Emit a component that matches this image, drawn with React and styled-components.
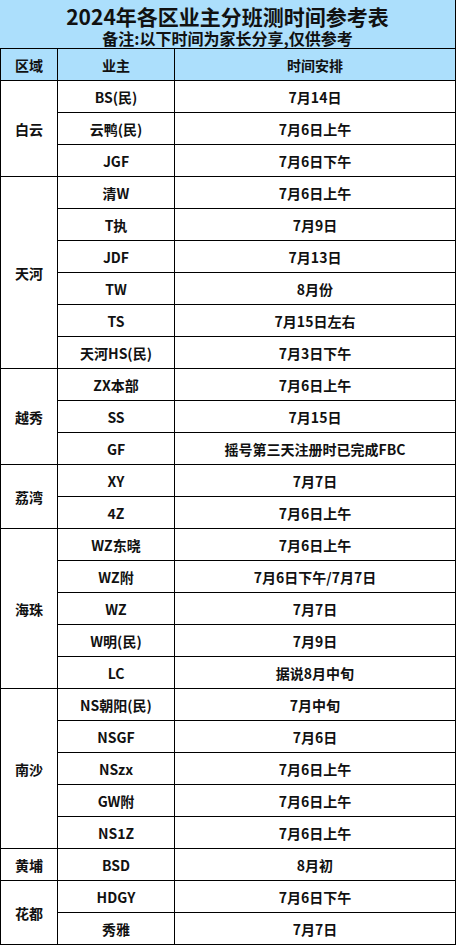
import React from 'react';
import styled, { createGlobalStyle } from 'styled-components';

const GlobalStyle = createGlobalStyle`
  html, body {
    margin: 0;
    padding: 0;
    background: #ffffff;
  }
  body {
    font-family: 'Noto Sans CJK SC', 'Noto Sans', sans-serif;
    color: #111;
  }
`;

const groups = [
  { area: '白云', rows: [['BS(民)', '7月14日'], ['云鸭(民)', '7月6日上午'], ['JGF', '7月6日下午']] },
  {
    area: '天河',
    rows: [
      ['清W', '7月6日上午'],
      ['T执', '7月9日'],
      ['JDF', '7月13日'],
      ['TW', '8月份'],
      ['TS', '7月15日左右'],
      ['天河HS(民)', '7月3日下午'],
    ],
  },
  { area: '越秀', rows: [['ZX本部', '7月6日上午'], ['SS', '7月15日'], ['GF', '摇号第三天注册时已完成FBC']] },
  { area: '荔湾', rows: [['XY', '7月7日'], ['4Z', '7月6日上午']] },
  {
    area: '海珠',
    rows: [
      ['WZ东晓', '7月6日上午'],
      ['WZ附', '7月6日下午/7月7日'],
      ['WZ', '7月7日'],
      ['W明(民)', '7月9日'],
      ['LC', '据说8月中旬'],
    ],
  },
  {
    area: '南沙',
    rows: [
      ['NS朝阳(民)', '7月中旬'],
      ['NSGF', '7月6日'],
      ['NSzx', '7月6日上午'],
      ['GW附', '7月6日上午'],
      ['NS1Z', '7月6日上午'],
    ],
  },
  { area: '黄埔', rows: [['BSD', '8月初']] },
  { area: '花都', rows: [['HDGY', '7月6日下午'], ['秀雅', '7月7日']] },
];

export default function App() {
  return (
    <>
      <GlobalStyle />
      <Sheet>
        <Banner>
          <Title>2024年各区业主分班测时间参考表</Title>
          <Note>备注:以下时间为家长分享,仅供参考</Note>
        </Banner>
        <Table>
          <colgroup>
            <col style={{ width: 57 }} />
            <col style={{ width: 117 }} />
            <col />
          </colgroup>
          <thead>
            <tr>
              <Head>区域</Head>
              <Head>业主</Head>
              <Head>时间安排</Head>
            </tr>
          </thead>
          <tbody>
            {groups.map(g =>
              g.rows.map((r, i) => (
                <tr key={g.area + i}>
                  {i === 0 && <Cell rowSpan={g.rows.length}>{g.area}</Cell>}
                  <Cell>{r[0]}</Cell>
                  <Cell>{r[1]}</Cell>
                </tr>
              ))
            )}
          </tbody>
        </Table>
      </Sheet>
    </>
  );
}

const Sheet = styled.div`
  width: 456px;
`;

const Banner = styled.div`
  height: 48px;
  padding-top: 5px;
  background: #acdffc;
  border-right: 1px solid #000;
  box-sizing: border-box;
  display: flex;
  flex-direction: column;
  align-items: center;
`;

const Title = styled.div`
  font-size: 21px;
  font-weight: 700;
  line-height: 22px;
`;

const Note = styled.div`
  font-size: 16px;
  font-weight: 700;
  line-height: 18px;
  margin-top: 2px;
`;

const Table = styled.table`
  width: 456px;
  border-collapse: collapse;
  table-layout: fixed;
  border-bottom: 1px solid #000;
  border-right: 1px solid #000;
`;

const Cell = styled.td`
  height: 31px;
  padding: 0;
  border: 1px solid #000;
  text-align: center;
  vertical-align: middle;
  font-size: 14px;
  font-weight: 700;
  line-height: 18px;
`;

const Head = styled.th`
  height: 31px;
  padding: 0;
  border: 1px solid #000;
  background: #acdffc;
  text-align: center;
  vertical-align: middle;
  font-size: 14px;
  font-weight: 700;
`;
